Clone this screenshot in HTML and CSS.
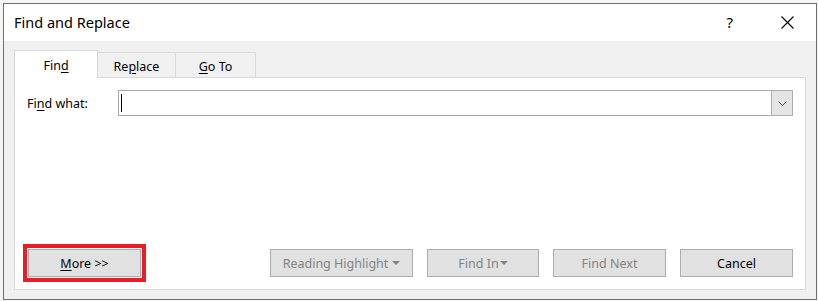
FILE: index.html
```html
<!DOCTYPE html>
<html lang="en">
<head>
    <meta charset="UTF-8">
    <title>Find and Replace</title>
    <link rel="stylesheet" href="styles.css">
</head>
<body>
    <div class="window">
        <div class="titlebar">
            <span class="title">Find and Replace</span>
            <div class="controls">
                <span class="help">?</span>
                <span class="close">
                    <svg width="13" height="13" viewBox="0 0 13 13">
                        <path d="M0.5 0.5 L12.5 12.5 M12.5 0.5 L0.5 12.5" stroke="#000" stroke-width="1.1" fill="none"/>
                    </svg>
                </span>
            </div>
        </div>

        <div class="dialog">
            <div class="tabs">
                <div class="tab tab-active">Fin<u>d</u></div>
                <div class="tab tab-replace">Re<u>p</u>lace</div>
                <div class="tab tab-goto"><u>G</u>o To</div>
            </div>

            <div class="panel">
                <div class="find-row">
                    <label class="find-label">Fi<u>n</u>d what:</label>
                    <div class="combo">
                        <span class="caret"></span>
                        <span class="drop">
                            <svg width="9" height="5" viewBox="0 0 9 5">
                                <path d="M0.5 0.5 L4.5 4.5 L8.5 0.5" stroke="#606060" stroke-width="1" fill="none"/>
                            </svg>
                        </span>
                    </div>
                </div>

                <div class="buttons">
                    <button class="btn btn-more"><u>M</u>ore &gt;&gt;</button>
                    <div class="button-group">
                        <button class="btn btn-wide disabled">Reading Highlight <span class="arrow"></span></button>
                        <button class="btn btn-findin disabled">Find In<span class="arrow"></span></button>
                        <button class="btn disabled">Find Next</button>
                        <button class="btn">Cancel</button>
                    </div>
                </div>
            </div>
        </div>
    </div>
</body>
</html>
```

FILE: styles.css
```css
:root {
    --border-color: #d9d9d9;
    --dialog-bg: #f0f0f0;
    --button-bg: #e1e1e1;
    --button-border: #adadad;
    --disabled-text: #838383;
}

* {
    margin: 0;
    padding: 0;
    box-sizing: border-box;
}

body {
    font-family: 'Noto Sans', 'Open Sans', sans-serif;
    font-size: 12px;
    color: #000;
    background-color: #f5f5f5;
    width: 818px;
    height: 301px;
    overflow: hidden;
}

u {
    text-decoration: underline;
    text-underline-offset: 2px;
}

.window {
    margin: 3px 0 0 3px;
    width: 814px;
    height: 297px;
    border: 1px solid #6f6f6f;
    background-color: var(--dialog-bg);
    display: flex;
    flex-direction: column;
}

.titlebar {
    height: 37px;
    background-color: #fff;
    display: flex;
    align-items: center;
    justify-content: space-between;
    padding-left: 10px;
}

.title {
    font-size: 14.5px;
    margin-top: -1px;
}

.controls {
    display: flex;
    align-items: center;
}

.help {
    font-size: 15px;
    margin-right: 48px;
    margin-top: -2px;
}

.close {
    display: flex;
    margin-right: 22px;
}

.dialog {
    flex: 1;
    display: flex;
    flex-direction: column;
    padding: 9px 10px 9px 10px;
}

.tabs {
    display: flex;
    align-items: flex-end;
    height: 27px;
}

.tab {
    height: 25px;
    border: 1px solid var(--border-color);
    border-bottom: none;
    display: flex;
    align-items: center;
    justify-content: center;
    padding-top: 2px;
    font-size: 12.5px;
}

.tab-active {
    width: 84px;
    height: 28px;
    margin-bottom: -1px;
    padding-top: 1px;
    background-color: #fff;
    position: relative;
    z-index: 1;
}

.tab-replace {
    width: 79px;
    margin-left: -1px;
}

.tab-goto {
    width: 81px;
    margin-left: -1px;
}

.panel {
    flex: 1;
    background-color: #fff;
    border: 1px solid var(--border-color);
    display: flex;
    flex-direction: column;
    padding: 12px 12px 12px 12px;
}

.find-row {
    display: flex;
    align-items: center;
}

.find-label {
    width: 91px;
    font-size: 12.5px;
}

.combo {
    flex: 1;
    height: 26px;
    border: 1px solid #a9a9a9;
    display: flex;
    align-items: center;
    justify-content: space-between;
    padding-left: 2px;
}

.caret {
    width: 1px;
    height: 18px;
    background-color: #000;
}

.drop {
    width: 22px;
    height: 26px;
    margin: -1px -1px -1px 0;
    border: 1px solid var(--button-border);
    background-color: #e5e5e5;
    display: flex;
    align-items: center;
    justify-content: center;
}

.buttons {
    margin-top: auto;
    display: flex;
    justify-content: space-between;
    align-items: center;
    padding-left: 1px;
}

.button-group {
    display: flex;
    gap: 14px;
}

.btn {
    width: 113px;
    height: 28px;
    font-family: inherit;
    font-size: 12.5px;
    color: #000;
    background-color: var(--button-bg);
    border: 1px solid var(--button-border);
    display: flex;
    align-items: center;
    justify-content: center;
}

.btn-more {
    outline: 4px solid #ed1c24;
    outline-offset: 1px;
}

.btn-wide {
    width: 143px;
}

.btn-findin {
    width: 112px;
}

.disabled {
    color: var(--disabled-text);
}

.arrow {
    display: inline-block;
    width: 0;
    height: 0;
    margin-left: 4px;
    border-left: 4px solid transparent;
    border-right: 4px solid transparent;
    border-top: 4px solid var(--disabled-text);
}

.btn-findin .arrow {
    margin-left: 1px;
}
```
